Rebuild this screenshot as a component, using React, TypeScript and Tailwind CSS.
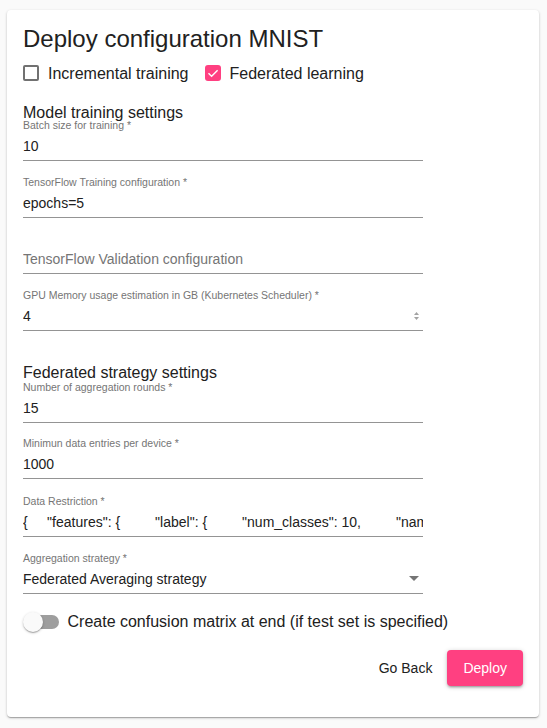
import { useState } from 'react'

type FieldProps = {
  label?: string
  value?: string
  placeholder?: string
  spinner?: boolean
  select?: boolean
  className?: string
}

function Field({ label, value, placeholder, spinner, select, className }: FieldProps) {
  const [v, setV] = useState(value ?? '')
  return (
    <div className={`relative w-[400px] border-b border-[#949494] pb-[4px] ${className ?? ''}`}>
      <div className="h-[12px] text-[10.5px] leading-[12px] text-[#757575] whitespace-nowrap">{label}</div>
      <input
        value={v}
        onChange={e => setV(e.target.value)}
        placeholder={placeholder}
        readOnly={select}
        className="mt-[5px] block h-[20px] w-full text-[14px] leading-[20px] text-[#212121] placeholder:text-[#757575] outline-none"
      />
      {spinner && (
        <svg className="absolute right-[3px] bottom-[9px]" width="7" height="10" viewBox="0 0 7 10">
          <path d="M1 4 L3.5 1 L6 4 Z" fill="#a3a3a3" />
          <path d="M1 6 L6 6 L3.5 9 Z" fill="#a3a3a3" />
        </svg>
      )}
      {select && (
        <svg className="absolute right-[4px] bottom-[12px]" width="10" height="5" viewBox="0 0 10 5">
          <path d="M0 0 L5 5 L10 0 Z" fill="#757575" />
        </svg>
      )}
    </div>
  )
}

function Checkbox({ checked, label }: { checked: boolean; label: string }) {
  return (
    <label className="flex items-start gap-[9px] text-[16px] leading-[24px] text-[#212121]">
      {checked ? (
        <span className="mt-[3px] flex h-[16px] w-[16px] items-center justify-center rounded-[3px] bg-[#ff4081]">
          <svg width="16" height="16" viewBox="0 0 16 16">
            <polyline points="3.5,8.2 6.6,11.2 12.6,5.2" fill="none" stroke="#fff" strokeWidth="1.4" />
          </svg>
        </span>
      ) : (
        <span className="mt-[3px] h-[16px] w-[16px] rounded-[2px] border-2 border-[#717171]" />
      )}
      <span>{label}</span>
    </label>
  )
}

const dataRestriction =
  '{     "features": {         "label": {         "num_classes": 10,         "name": "label",         "type": "ClassLabel"         }     } }'

export default function App() {
  return (
    <div className="min-h-[728px] bg-[#fafafa] pl-[7px] pt-[10px] font-['Liberation_Sans',Arial,sans-serif]">
      <div className="w-[532px] rounded-[4px] bg-white px-[16px] pt-[13px] pb-[31px] shadow-[0_1px_3px_0_rgba(0,0,0,0.2),0_1px_1px_0_rgba(0,0,0,0.14),0_2px_1px_-1px_rgba(0,0,0,0.12)]">
        <h1 className="text-[24px] leading-[32px] text-[#212121]">Deploy configuration MNIST</h1>

        <div className="mt-[7px] flex gap-[16px]">
          <Checkbox checked={false} label="Incremental training" />
          <Checkbox checked label="Federated learning" />
        </div>

        <h2 className="mt-[20px] text-[16px] leading-[13px] text-[#212121]">Model training settings</h2>
        <Field label="Batch size for training *" value="10" />
        <Field className="mt-[15px]" label="TensorFlow Training configuration *" value="epochs=5" />
        <Field className="mt-[14px]" placeholder="TensorFlow Validation configuration" />
        <Field className="mt-[15px]" label="GPU Memory usage estimation in GB (Kubernetes Scheduler) *" value="4" spinner />

        <h2 className="mt-[35px] text-[16px] leading-[13px] text-[#212121]">Federated strategy settings</h2>
        <Field className="mt-[2px]" label="Number of aggregation rounds *" value="15" />
        <Field className="mt-[14px]" label="Minimun data entries per device *" value="1000" />
        <Field className="mt-[16px]" label="Data Restriction *" value={dataRestriction} />
        <Field className="mt-[15px]" label="Aggregation strategy *" value="Federated Averaging strategy" select />

        <div className="mt-[16px] flex items-center text-[16px] leading-[24px] text-[#212121]">
          <div className="relative h-[24px] w-[36px]">
            <div className="absolute left-[2px] top-[5px] h-[14px] w-[34px] rounded-[7px] bg-[#9e9e9e]" />
            <div className="absolute left-0 top-[2px] h-[20px] w-[20px] rounded-full bg-[#fafafa] shadow-[0_1px_3px_0_rgba(0,0,0,0.2),0_1px_1px_0_rgba(0,0,0,0.14),0_2px_1px_-1px_rgba(0,0,0,0.12)]" />
          </div>
          <span className="ml-[8.5px]">Create confusion matrix at end (if test set is specified)</span>
        </div>

        <div className="mt-[16px] flex justify-end gap-[7px]">
          <button className="h-[36px] rounded-[4px] px-[8px] text-[14px] text-[#212121]">Go Back</button>
          <button className="h-[36px] rounded-[4px] bg-[#ff4081] px-[16px] text-[14px] text-white shadow-[0_1px_5px_0_rgba(0,0,0,0.2),0_2px_2px_0_rgba(0,0,0,0.14),0_3px_1px_-2px_rgba(0,0,0,0.12)]">
            Deploy
          </button>
        </div>
      </div>
    </div>
  )
}
